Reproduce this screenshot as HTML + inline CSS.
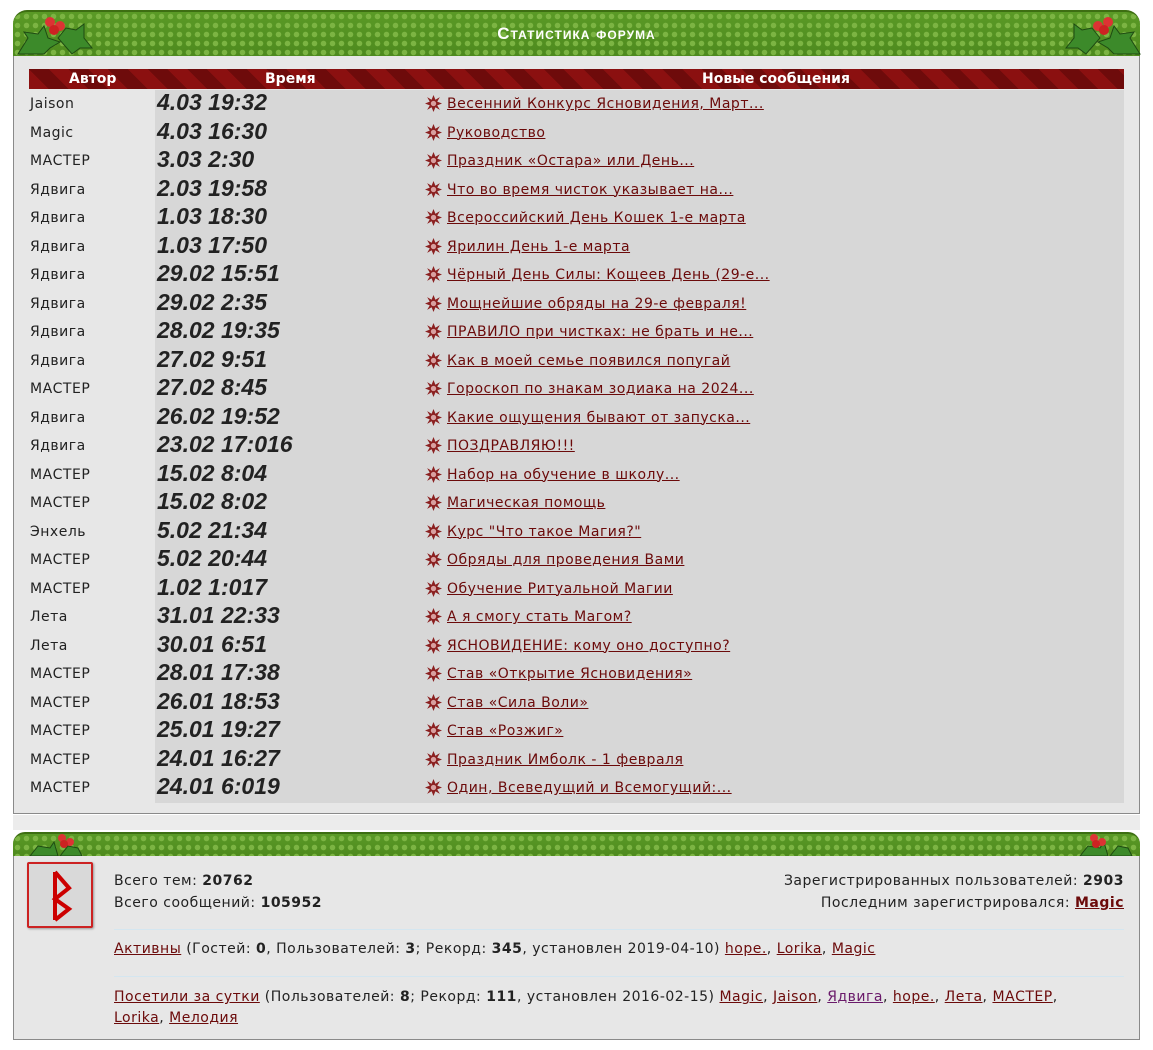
<!DOCTYPE html>
<html><head><meta charset="utf-8"><style>
body{margin:0;background:#fff;width:1153px;height:1050px;position:relative;font-family:"DejaVu Sans","Liberation Sans",sans-serif;font-size:14px;letter-spacing:0.5px;color:#222;overflow:hidden}
a{color:#6b0a0a;text-decoration:underline}
.hdr{position:absolute;left:13px;width:1127px;border-radius:14px 14px 0 0;background:radial-gradient(circle,#7cb443 2.5px,transparent 3px) 0 0/9px 9px,linear-gradient(#5a9a26,#4e8a1e);border-top:2px solid #3d6e12}
.box{position:absolute;left:13px;width:1125px;background:#e7e7e7;border:1px solid #8a8a8a;border-top:none}
.th{position:absolute;top:69px;left:29px;width:1095px;height:20px;background:repeating-linear-gradient(45deg,#8b1010 0 14px,#6e0b0b 14px 28px);color:#fff;font-weight:bold;font-size:14px;line-height:20px;letter-spacing:0}
.rows{position:absolute;left:29px;top:90px;width:1095px}
.r{height:28.5px;position:relative;line-height:28.5px}
.r .a{position:absolute;left:1px;width:125px}
.r .t{position:absolute;left:126px;width:969px;height:100%;background:#d7d7d7}
.r .t b{position:absolute;left:2px;font:italic bold 23px "Liberation Sans",sans-serif;letter-spacing:0;color:#222;top:-1px}
.r .t span{position:absolute;left:268px;top:0}
.holly{position:absolute}
</style></head><body>
<div class="hdr" style="top:10px;height:44px"></div>
<svg class="holly" style="left:14px;top:8px" width="80" height="48"><path d="M4 46 L14 30 L10 24 L24 26 L30 18 L34 30 L46 34 L36 40 L30 46Z" fill="#3c8a2a" stroke="#1e4a12"/><path d="M44 30 L52 20 L62 22 L70 16 L70 30 L78 40 L66 40 L58 46Z" fill="#3c8a2a" stroke="#1e4a12"/><circle cx="36" cy="14" r="5" fill="#d33"/><circle cx="46" cy="18" r="5" fill="#d33"/><circle cx="40" cy="22" r="5" fill="#c22"/></svg>
<svg class="holly" style="left:1064px;top:8px" width="80" height="48"><g transform="translate(80,0) scale(-1,1)"><path d="M4 46 L14 30 L10 24 L24 26 L30 18 L34 30 L46 34 L36 40 L30 46Z" fill="#3c8a2a" stroke="#1e4a12"/><path d="M44 30 L52 20 L62 22 L70 16 L70 30 L78 40 L66 40 L58 46Z" fill="#3c8a2a" stroke="#1e4a12"/><circle cx="36" cy="14" r="5" fill="#d33"/><circle cx="46" cy="18" r="5" fill="#d33"/><circle cx="40" cy="22" r="5" fill="#c22"/></g></svg>
<div style="position:absolute;top:24px;left:0;width:1153px;text-align:center;color:#fff;font:bold 17px 'Liberation Sans',sans-serif;font-variant:small-caps;letter-spacing:1px">Статистика форума</div>
<div class="box" style="top:56px;height:757px"></div>
<div class="th"><span style="position:absolute;left:40px">Автор</span><span style="position:absolute;left:236px">Время</span><span style="position:absolute;left:673px">Новые сообщения</span></div>
<div class="rows" id="rows"></div>
<div style="position:absolute;left:13px;top:815px;width:1127px;height:15px;background:#ececec"></div>
<div class="hdr" style="top:832px;height:22px;border-radius:12px 12px 0 0"></div>
<svg class="holly" style="left:24px;top:828px" width="60" height="28"><path d="M6 28 L14 18 L26 20 L30 14 L34 28Z" fill="#3c8a2a" stroke="#1e4a12"/><path d="M36 28 L44 18 L54 20 L58 28Z" fill="#3c8a2a" stroke="#1e4a12"/><circle cx="38" cy="10" r="4" fill="#d33"/><circle cx="46" cy="14" r="4" fill="#d33"/><circle cx="40" cy="16" r="4" fill="#c22"/></svg>
<svg class="holly" style="left:1074px;top:828px" width="60" height="28"><path d="M6 28 L14 18 L26 20 L30 14 L34 28Z" fill="#3c8a2a" stroke="#1e4a12"/><path d="M36 28 L44 18 L54 20 L58 28Z" fill="#3c8a2a" stroke="#1e4a12"/><circle cx="20" cy="10" r="4" fill="#d33"/><circle cx="28" cy="14" r="4" fill="#d33"/><circle cx="22" cy="16" r="4" fill="#c22"/></svg>
<div class="box" style="top:856px;height:183px"></div>
<div style="position:absolute;left:27px;top:862px;width:66px;height:66px;background:#d9d9d9;border:2px solid #c22;box-sizing:border-box;border-radius:2px;box-shadow:1px 1px 2px #999"><svg width="62" height="62"><path d="M26 8 V56 M26 8 L40 24 L26 35 L40 45 L26 56" stroke="#c00" stroke-width="4" fill="none" stroke-linejoin="miter"/></svg></div>
<div style="position:absolute;left:114px;top:870px;line-height:22px">Всего тем: <b>20762</b><br>Всего сообщений: <b>105952</b></div>
<div style="position:absolute;right:29px;top:870px;line-height:22px;text-align:right">Зарегистрированных пользователей: <b>2903</b><br>Последним зарегистрировался: <a href="#" style="font-weight:bold">Magic</a></div>
<div style="position:absolute;left:114px;top:929px;width:1010px;border-top:1px solid #d4e6f0"></div>
<div style="position:absolute;left:114px;top:941px"><a href="#">Активны</a> (Гостей: <b>0</b>, Пользователей: <b>3</b>; Рекорд: <b>345</b>, установлен 2019-04-10) <a href="#">hope.</a>, <a href="#">Lorika</a>, <a href="#">Magic</a></div>
<div style="position:absolute;left:114px;top:976px;width:1010px;border-top:1px solid #d4e6f0"></div>
<div style="position:absolute;left:114px;top:987px;line-height:21px;width:1020px"><a href="#">Посетили за сутки</a> (Пользователей: <b>8</b>; Рекорд: <b>111</b>, установлен 2016-02-15) <a href="#">Magic</a>, <a href="#">Jaison</a>, <a href="#" style="color:#6a1a6a">Ядвига</a>, <a href="#">hope.</a>, <a href="#">Лета</a>, <a href="#">МАСТЕР</a>,<br><a href="#">Lorika</a>, <a href="#">Мелодия</a></div>
<script>
var d=[["Jaison","4.03 19:32","Весенний Конкурс Ясновидения, Март..."],["Magic","4.03 16:30","Руководство"],["МАСТЕР","3.03 2:30","Праздник «Остара» или День..."],["Ядвига","2.03 19:58","Что во время чисток указывает на..."],["Ядвига","1.03 18:30","Всероссийский День Кошек 1-е марта"],["Ядвига","1.03 17:50","Ярилин День 1-е марта"],["Ядвига","29.02 15:51","Чёрный День Силы: Кощеев День (29-е..."],["Ядвига","29.02 2:35","Мощнейшие обряды на 29-е февраля!"],["Ядвига","28.02 19:35","ПРАВИЛО при чистках: не брать и не..."],["Ядвига","27.02 9:51","Как в моей семье появился попугай"],["МАСТЕР","27.02 8:45","Гороскоп по знакам зодиака на 2024..."],["Ядвига","26.02 19:52","Какие ощущения бывают от запуска..."],["Ядвига","23.02 17:016","ПОЗДРАВЛЯЮ!!!"],["МАСТЕР","15.02 8:04","Набор на обучение в школу..."],["МАСТЕР","15.02 8:02","Магическая помощь"],["Энхель","5.02 21:34","Курс \"Что такое Магия?\""],["МАСТЕР","5.02 20:44","Обряды для проведения Вами"],["МАСТЕР","1.02 1:017","Обучение Ритуальной Магии"],["Лета","31.01 22:33","А я смогу стать Магом?"],["Лета","30.01 6:51","ЯСНОВИДЕНИЕ: кому оно доступно?"],["МАСТЕР","28.01 17:38","Став «Открытие Ясновидения»"],["МАСТЕР","26.01 18:53","Став «Сила Воли»"],["МАСТЕР","25.01 19:27","Став «Розжиг»"],["МАСТЕР","24.01 16:27","Праздник Имболк - 1 февраля"],["МАСТЕР","24.01 6:019","Один, Всеведущий и Всемогущий:..."]];
var star='<svg width="17" height="17" viewBox="0 0 16 16" style="position:absolute;left:270px;top:5px"><path d="M8 0 L9.8 4.5 L14 2 L11.5 6.2 L16 8 L11.5 9.8 L14 14 L9.8 11.5 L8 16 L6.2 11.5 L2 14 L4.5 9.8 L0 8 L4.5 6.2 L2 2 L6.2 4.5Z" fill="#8b2020"/><circle cx="8" cy="8" r="2.5" fill="#d8a0a0"/></svg>';
var h='';d.forEach(function(r){h+='<div class="r"><span class="a">'+r[0]+'</span><div class="t"><b>'+r[1]+'</b>'+star+'<span style="left:292px"><a href="#">'+r[2]+'</a></span></div></div>';});
document.getElementById('rows').innerHTML=h;
</script>
</body></html>
